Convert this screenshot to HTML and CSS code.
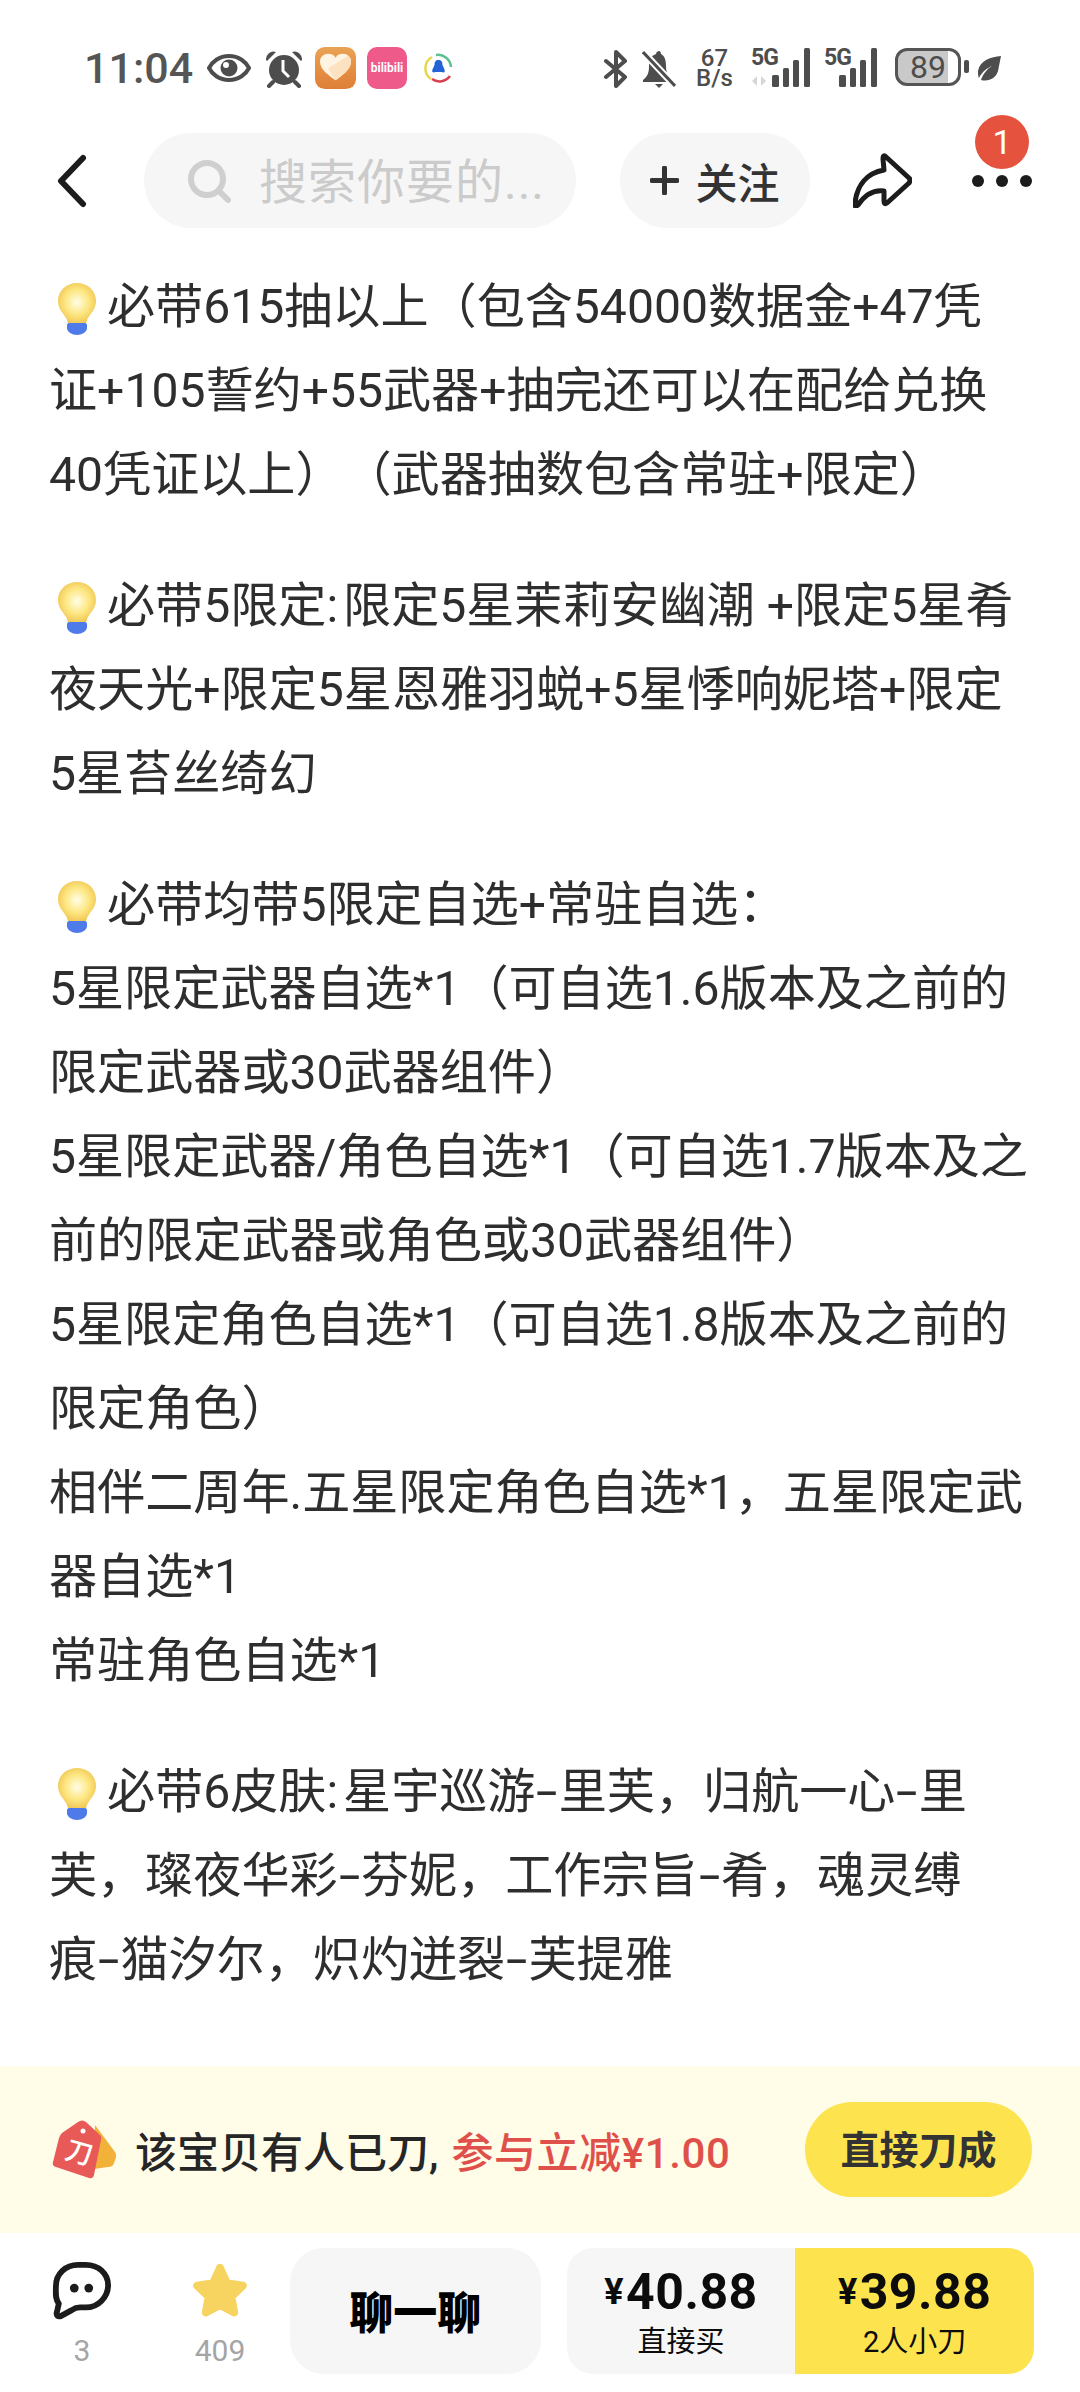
FILE: index.html
```html
<!DOCTYPE html>
<html lang="zh-CN">
<head>
    <meta charset="UTF-8">
    <meta name="viewport" content="width=device-width, initial-scale=1.0">
    <title>宝贝详情</title>
    <link rel="stylesheet" href="styles.css">
</head>
<body>
    <svg class="defs" width="0" height="0">
        <defs>
            <radialGradient id="bulbGlow" cx="50%" cy="48%" r="58%">
                <stop offset="0" stop-color="#fffee6"/>
                <stop offset="0.55" stop-color="#fde680"/>
                <stop offset="1" stop-color="#eec24e"/>
            </radialGradient>
            <linearGradient id="heartBg" x1="0" y1="0" x2="0" y2="1">
                <stop offset="0" stop-color="#eaa253"/>
                <stop offset="1" stop-color="#df7f37"/>
            </linearGradient>
            <symbol id="bulb" viewBox="0 0 38 52">
                <path d="M19 0C8 0 0 8 0 18c0 8 5 12 8 17 1 1 1 3 2 5h18c1-2 1-4 2-5 3-5 8-9 8-17C38 8 30 0 19 0z" fill="url(#bulbGlow)"/>
                <path d="M11 40h16c1 0 2 1 2 2v3c0 4-5 7-10 7s-10-3-10-7v-3c0-1 1-2 2-2z" fill="#4f7bea"/>
            </symbol>
            <symbol id="signal" viewBox="0 0 40 40">
                <rect x="0" y="27" width="7" height="12" rx="1.5"/>
                <rect x="11" y="20" width="6" height="19" rx="1.5"/>
                <rect x="21" y="12" width="6" height="27" rx="1.5"/>
                <rect x="32" y="0" width="6" height="39" rx="1.5"/>
            </symbol>
        </defs>
    </svg>

    <div class="page">
        <div class="status">
            <span class="time">11:04</span>
            <svg class="ic-eye" width="44" height="30" viewBox="0 0 44 30"><path d="M22 3C12 3 5 9 2 15c3 6 10 12 20 12s17-6 20-12C39 9 32 3 22 3z" fill="none" stroke="#4d4d4d" stroke-width="4"/><circle cx="22" cy="15" r="8.5" fill="#4d4d4d"/><circle cx="19" cy="12" r="3" fill="#fff"/></svg>
            <svg class="ic-alarm" width="38" height="38" viewBox="0 0 38 38"><circle cx="19" cy="20" r="15" fill="#4d4d4d"/><path d="M1 10C1 4 6 0 11 2L2 11z" fill="#4d4d4d"/><path d="M37 10C37 4 32 0 27 2L36 11z" fill="#4d4d4d"/><path d="M8 32l-4 4M30 32l4 4" stroke="#4d4d4d" stroke-width="4" stroke-linecap="round"/><path d="M18 10v11l6 6" fill="none" stroke="#fff" stroke-width="3"/></svg>
            <svg class="ic-heart" width="41" height="42" viewBox="0 0 41 43" preserveAspectRatio="none"><rect width="41" height="43" rx="10" fill="url(#heartBg)"/><path d="M20.500 34C14 29 5 23 5 15c0-5 4-8 8-8 3 0 6 1 7.500 4C22 8 25 7 28 7c4 0 8 3 8 8 0 8-9 14-15.500 19z" fill="#fff3e2"/><path d="M20.500 34C26 30 36 23 36 15c0-3-1-5-3-6L13 22z" fill="#fde2c2"/></svg>
            <span class="ic-bili">bilibili</span>
            <svg class="ic-news" width="29" height="30" viewBox="0 0 29 30"><path d="M7 26A13 13 0 0 1 8 4" fill="none" stroke="#e9d54a" stroke-width="2.500"/><path d="M12 2a13 13 0 0 1 15 12" fill="none" stroke="#5dc08f" stroke-width="2.500"/><path d="M8 26a13 13 0 0 0 18-3" fill="none" stroke="#d6404f" stroke-width="2.500"/><path d="M14.500 7c3 0 4 2 4 5 1 3 3 5 2 7-1 1-2 0-3 0h-6c-1 0-2 1-3 0-1-2 1-4 2-7 0-3 1-5 4-5z" fill="#2463d6"/></svg>

            <svg class="ic-bt" width="24" height="38" viewBox="0 0 24 38"><path d="M2 11l19 16-9 9V2l9 9L2 27" fill="none" stroke="#4d4d4d" stroke-width="4" stroke-linejoin="round" stroke-linecap="round"/></svg>
            <svg class="ic-bell" width="34" height="40" viewBox="0 0 34 40"><path d="M17 2c-1 0-3 1-3 3C8 7 7 12 7 17c0 6-1 10-6 14v2h29v-2c-4-3-6-8-6-14 0-5-1-10-5-12 0-2-1-3-2-3z" fill="#4d4d4d"/><path d="M13 35h8l-4 4z" fill="#4d4d4d"/><path d="M1 3l32 34" stroke="#fff" stroke-width="7"/><path d="M1 3l32 34" stroke="#4d4d4d" stroke-width="3"/></svg>
            <span class="speed"><span>67</span><span>B/s</span></span>
            <span class="sig sig-first">
                <span class="g5">5G</span>
                <svg width="40" height="40" viewBox="0 0 40 40"><use href="#signal" width="40" height="40" fill="#4d4d4d"/></svg>
                <svg class="updown" width="14" height="10" viewBox="0 0 14 10"><path d="M5 0L0 5l5 5zM9 10l5-5-5-5z" fill="#d6d6d6"/></svg>
            </span>
            <span class="sig">
                <span class="g5">5G</span>
                <svg width="40" height="40" viewBox="0 0 40 40"><use href="#signal" width="40" height="40" fill="#4d4d4d"/></svg>
            </span>
            <span class="battery">89</span>
            <span class="battery-nub"></span>
            <svg class="ic-leaf" width="24" height="25" viewBox="0 0 24 25"><path d="M24 0C14 1 3 4 1 15c0 3 0 5 1 7 3-6 8-10 13-12-5 3-9 8-11 14 8 2 15-2 17-9 1-5 2-10 3-15z" fill="#4d4d4d"/></svg>
        </div>

        <div class="topbar">
            <svg class="back" width="30" height="54" viewBox="0 0 30 54"><path d="M26 4L4 27l22 23" fill="none" stroke="#1c1c1c" stroke-width="6" stroke-linecap="round" stroke-linejoin="round"/></svg>
            <div class="search">
                <svg width="44" height="44" viewBox="0 0 44 44"><circle cx="20" cy="20" r="16" fill="none" stroke="#cfcfcf" stroke-width="6"/><path d="M32 32l9 9" stroke="#cfcfcf" stroke-width="6" stroke-linecap="round"/></svg>
                <span class="search-text">搜索你要的...</span>
            </div>
            <div class="follow"><svg width="29" height="29" viewBox="0 0 29 29"><path d="M14.500 2v25M2 14.500h25" stroke="#333" stroke-width="5" stroke-linecap="round"/></svg>关注</div>
            <svg class="share" width="59" height="55" viewBox="0 0 59 55"><path d="M32 3L56 25Q58 27 56 30L34 50Q31 52 31 48L31 38Q16 36 5 52Q1 55 2 50C4 32 14 20 31 17L30 6Q30 2 32 3Z" fill="none" stroke="#1c1c1c" stroke-width="5" stroke-linejoin="round"/></svg>
            <div class="more">
                <i></i><i></i><i></i>
                <span class="badge">1</span>
            </div>
        </div>

        <div class="article">
            <p><svg class="bulb"><use href="#bulb"/></svg>必带615抽以上（包含54000数据金+47凭<br>证+105誓约+55武器+抽完还可以在配给兑换<br>40凭证以上）（武器抽数包含常驻+限定）</p>
            <p><svg class="bulb"><use href="#bulb"/></svg>必带5限定<span class="co">:</span>限定5星茉莉安幽潮 +限定5星肴<br>夜天光+限定5星恩雅羽蜕+5星悸响妮塔+限定<br>5星苔丝绮幻</p>
            <p><svg class="bulb"><use href="#bulb"/></svg>必带均带5限定自选+常驻自选：<br>5星限定武器自选*1（可自选1.6版本及之前的<br>限定武器或30武器组件）<br>5星限定武器/角色自选*1（可自选1.7版本及之<br>前的限定武器或角色或30武器组件）<br>5星限定角色自选*1（可自选1.8版本及之前的<br>限定角色）<br>相伴二周年.五星限定角色自选*1，五星限定武<br>器自选*1<br>常驻角色自选*1</p>
            <p><svg class="bulb"><use href="#bulb"/></svg>必带6皮肤<span class="co">:</span>星宇巡游<span class="hy">-</span>里芙，归航一心<span class="hy">-</span>里<br>芙，璨夜华彩<span class="hy">-</span>芬妮，工作宗旨<span class="hy">-</span>肴，魂灵缚<br>痕<span class="hy">-</span>猫汐尔，炽灼迸裂<span class="hy">-</span>芙提雅</p>
            <p><svg class="bulb"><use href="#bulb"/></svg></p>
        </div>

        <div class="banner">
            <svg class="tag" width="65" height="60" viewBox="0 0 65 60">
                <path d="M43 5l20 27c2 3 1 6-1 11-1 3-3 4-6 4l-14 2z" fill="#f2b23a"/>
                <path d="M26 2Q30-1 34 2L48 15Q50 17 49 20L42 55Q41 59 37 58L4 47Q0 46 1 42L7 18Q8 15 10 13z" fill="#e85a57"/>
                <circle cx="31" cy="11" r="2.500" fill="#fff"/>
                <text x="27" y="42" class="tag-text" transform="rotate(16 27 33)">刀</text>
            </svg>
            <span class="banner-text">该宝贝有人已刀,</span>
            <span class="banner-red">参与立减¥1.00</span>
            <div class="cut-btn">直接刀成</div>
        </div>

        <div class="actions">
            <div class="tab tab-msg">
                <svg width="60" height="58" viewBox="0 0 60 60"><path d="M26 3h8c13 0 23 9 23 21S47 47 34 47H28c-3 0-6 1-9 3L8 56c-3 1-5-1-4-4l2-9C2 38 3 32 3 25 3 12 13 3 26 3z" fill="none" stroke="#1c1c1c" stroke-width="6" stroke-linejoin="round"/><circle cx="22" cy="27" r="4.500" fill="#1c1c1c"/><circle cx="37" cy="27" r="4.500" fill="#1c1c1c"/></svg>
                <span>3</span>
            </div>
            <div class="tab tab-star">
                <svg width="60" height="58" viewBox="0 0 58 58"><polygon points="29,6 36,21.300 51.800,23.600 40.400,34.700 43.100,50.400 29,43 14.900,50.400 17.600,34.700 6.200,23.600 22,21.300" fill="#f7d35f" stroke="#f7d35f" stroke-width="8" stroke-linejoin="round"/></svg>
                <span>409</span>
            </div>
            <div class="chat">聊一聊</div>
            <div class="buy">
                <div class="buy-item buy-plain">
                    <div class="price"><small>¥</small>40.88</div>
                    <div class="price-label">直接买</div>
                </div>
                <div class="buy-item buy-cut">
                    <div class="price"><small>¥</small>39.88</div>
                    <div class="price-label">2人小刀</div>
                </div>
            </div>
        </div>
    </div>
</body>
</html>
```

FILE: styles.css
```css
* {
    box-sizing: border-box;
}
body {
    margin: 0;
    background: #fff;
    font-family: Roboto, "Noto Sans CJK SC", sans-serif;
    color: #2b2b2b;
}
.defs {
    position: absolute;
}
.page {
    width: 1080px;
    height: 2392px;
    display: flex;
    flex-direction: column;
    overflow: hidden;
}

/* status bar */
.status {
    height: 133px;
    padding: 47px 79px 0 84px;
    display: flex;
    align-items: flex-start;
    color: #4d4d4d;
}
.status > * {
    flex: none;
}
.time {
    font-size: 43px;
    font-weight: 500;
    line-height: 43px;
    width: 108px;
    color: #555;
}
.ic-eye { margin: 6px 0 0 15px; }
.ic-alarm { margin: 3px 0 0 14px; }
.ic-heart { margin-left: 12px; }
.ic-bili {
    width: 40px;
    height: 42px;
    margin-left: 11px;
    border-radius: 10px;
    background: #ee5a8a;
    color: #fff;
    font-size: 12px;
    font-weight: 700;
    line-height: 42px;
    text-align: center;
}
.ic-news { margin: 6px 0 0 17px; }
.ic-bt { margin: 3px 0 0 151px; }
.ic-bell { margin: 2px 0 0 14px; }
.speed {
    width: 37px;
    margin: 1px 0 0 20px;
    display: flex;
    flex-direction: column;
    align-items: center;
    font-size: 24px;
    line-height: 20px;
    font-weight: 500;
}
.sig {
    position: relative;
    display: flex;
    margin: 1px 0 0 12px;
    height: 40px;
}
.sig-first { margin-left: 18px; }
.g5 {
    width: 15px;
    font-size: 23px;
    font-weight: 700;
    line-height: 20px;
    letter-spacing: -1px;
    white-space: nowrap;
}
.sig-first .g5 { width: 21px; }
.updown {
    position: absolute;
    left: 1px;
    bottom: 2px;
}
.battery {
    width: 66px;
    height: 38px;
    margin: 1px 0 0 16px;
    border: 3px solid #555;
    border-radius: 12px;
    background: linear-gradient(to right, #c9c9c9 84%, #fff 84%);
    font-size: 32px;
    line-height: 32px;
    text-align: center;
}
.battery-nub {
    width: 5px;
    height: 13px;
    margin: 13px 0 0 3px;
    border-radius: 2px;
    background: #4d4d4d;
}
.ic-leaf { margin: 9px 0 0 8px; }

/* top bar */
.topbar {
    height: 95px;
    padding-left: 57px;
    display: flex;
    align-items: center;
}
.search {
    width: 432px;
    height: 95px;
    margin-left: 57px;
    padding-left: 43px;
    border-radius: 48px;
    background: #f6f6f6;
    display: flex;
    align-items: center;
    gap: 28px;
    color: #cbcbcb;
    font-size: 48px;
    letter-spacing: 1px;
}
.search-text {
    padding-bottom: 6px;
}
.follow {
    width: 190px;
    height: 95px;
    margin-left: 44px;
    border-radius: 48px;
    background: #f6f6f6;
    display: flex;
    align-items: center;
    justify-content: center;
    gap: 16px;
    font-size: 42px;
    font-weight: 500;
    color: #333;
}
.share {
    margin-left: 43px;
}
.more {
    position: relative;
    width: 60px;
    margin-left: 60px;
    display: flex;
    justify-content: space-between;
}
.more i {
    width: 12px;
    height: 12px;
    border-radius: 50%;
    background: #1c1c1c;
}
.badge {
    position: absolute;
    left: 3px;
    top: -60px;
    width: 54px;
    height: 54px;
    border-radius: 50%;
    background: #e5533f;
    color: #fff;
    font-size: 34px;
    line-height: 54px;
    text-align: center;
}

/* article */
.article {
    flex: 1;
    min-height: 0;
    overflow: hidden;
    padding: 37px 0 0 49px;
    font-size: 48.1px;
    line-height: 84px;
    white-space: nowrap;
    color: #2e2e2e;
    text-spacing-trim: space-all;
}
.article p {
    margin: 0 0 47px;
}
.bulb {
    width: 38px;
    height: 52px;
    margin: 0 11px 0 9px;
    vertical-align: -12px;
}
.hy {
    display: inline-block;
    margin: 0 5px;
    transform: scaleX(1.6);
}
.co {
    margin-right: 5px;
}

/* cut banner */
.banner {
    height: 167px;
    padding: 0 48px 0 52px;
    display: flex;
    align-items: center;
    background: #fffce8;
    font-size: 42px;
    font-weight: 500;
}
.tag {
    margin-right: 18px;
}
.tag-text {
    font-size: 27px;
    font-weight: 500;
    fill: #fff;
    text-anchor: middle;
}
.banner-text {
    color: #262626;
}
.banner-red {
    margin-left: 13px;
    color: #e0504a;
    letter-spacing: 0.6px;
}
.cut-btn {
    width: 227px;
    height: 95px;
    margin-left: auto;
    border-radius: 48px;
    background: #fde44f;
    font-size: 39px;
    font-weight: 700;
    line-height: 99px;
    text-align: center;
    color: #333;
}

/* bottom actions */
.actions {
    flex: none;
    height: 159px;
    padding: 15px 46px 0 52px;
    display: flex;
    align-items: flex-start;
}
.tab {
    display: flex;
    flex-direction: column;
    align-items: center;
    padding-top: 14px;
    color: #a5a5a5;
    font-size: 30px;
    line-height: 36px;
}
.tab span {
    margin-top: 13px;
}
.tab-msg { width: 60px; }
.tab-star { width: 60px; margin-left: 78px; }
.chat {
    width: 251px;
    height: 126px;
    margin-left: 40px;
    border-radius: 34px;
    background: #f6f6f6;
    font-size: 44px;
    font-weight: 900;
    line-height: 132px;
    text-align: center;
    color: #000;
}
.buy {
    width: 468px;
    height: 126px;
    margin-left: 26px;
    border-radius: 26px;
    overflow: hidden;
    display: flex;
    color: #0c0c0c;
}
.buy-item {
    display: flex;
    flex-direction: column;
    align-items: center;
    padding-top: 16px;
}
.buy-plain { width: 229px; background: #f6f6f6; }
.buy-cut { width: 239px; background: #fde44f; }
.price {
    font-size: 50px;
    font-weight: 700;
    line-height: 56px;
    letter-spacing: 0.5px;
}
.price small {
    font-size: 36px;
    margin-right: 2px;
    vertical-align: 5px;
}
.price-label {
    margin-top: 3px;
    font-size: 29px;
    line-height: 38px;
}
```
